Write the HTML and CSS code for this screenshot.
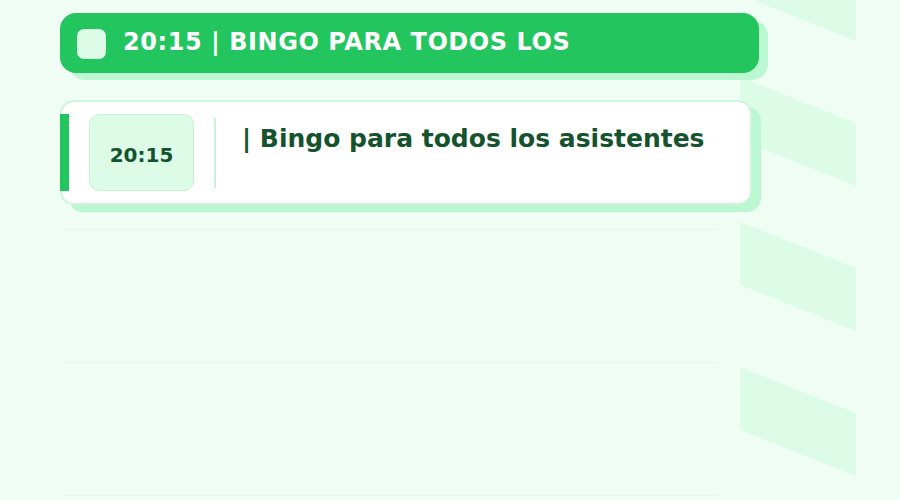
FILE: index.html
```html
<!DOCTYPE html>
<html lang="es">
<head>
<meta charset="utf-8">
<title>Programa</title>
<link rel="stylesheet" href="styles.css">
</head>
<body>
<div class="board">
  <svg class="stripes" width="900" height="500" viewBox="0 0 900 500" aria-hidden="true">
    <polygon points="740,-68 856,-22 856,41 740,-5"/>
    <polygon points="740,77 856,123 856,186 740,140"/>
    <polygon points="740,222 856,268 856,331 740,285"/>
    <polygon points="740,367 856,413 856,476 740,430"/>
  </svg>

  <div class="content">
    <header class="banner">
      <span class="banner-icon"></span>
      <h1 class="banner-title">20:15 | BINGO PARA TODOS LOS</h1>
    </header>

    <ul class="agenda">
      <li class="slot">
        <article class="event">
          <div class="event-time">20:15</div>
          <span class="event-divider"></span>
          <h2 class="event-title">| Bingo para todos los asistentes</h2>
        </article>
      </li>
      <li class="slot slot-empty"></li>
      <li class="slot slot-empty"></li>
    </ul>
  </div>
</div>
</body>
</html>
```

FILE: styles.css
```css
* {
  box-sizing: border-box;
}

html,
body {
  margin: 0;
  padding: 0;
}

body {
  width: 900px;
  height: 500px;
  overflow: hidden;
  background: #f0fdf4;
  font-family: "DejaVu Sans", "Noto Sans", sans-serif;
}

.board {
  position: relative;
  width: 900px;
  height: 500px;
}

/* decorative slanted bands down the right side */
.stripes {
  position: absolute;
  top: 0;
  left: 0;
  z-index: 0;
}

.stripes polygon {
  fill: #dcfce7;
}

.content {
  position: relative;
  z-index: 1;
  width: 699px;
  margin-left: 60px;
  padding-top: 13px;
}

/* top banner */
.banner {
  display: flex;
  align-items: center;
  gap: 17px;
  height: 60px;
  padding-left: 17px;
  background: #22c55e;
  border-radius: 16px;
  box-shadow: 9px 7px 0 #bbf7d0;
}

.banner-icon {
  flex: none;
  width: 29px;
  height: 30px;
  margin-top: 2px;
  border-radius: 7px;
  background: #dcfce7;
}

.banner-title {
  margin: 0 0 3px;
  color: #ffffff;
  font-size: 24px;
  font-weight: bold;
  letter-spacing: 0.55px;
  white-space: nowrap;
}

/* list of time slots */
.agenda {
  list-style: none;
  margin: 27px 0 0;
  padding: 0;
}

.slot::after {
  content: "";
  display: block;
  height: 1px;
  margin: 24px 41px 0 4px;
  background: #e4f7ea;
}

.slot-empty {
  padding-top: 108px;
}

.event {
  position: relative;
  display: flex;
  align-items: center;
  width: 692px;
  height: 105px;
  padding: 0 20px 0 27px;
  background: #ffffff;
  border: 2px solid #cdf5dc;
  border-radius: 14px;
  box-shadow: 9px 7px 0 #bbf7d0;
}

.event::before {
  content: "";
  position: absolute;
  left: -2px;
  top: 12px;
  bottom: 12px;
  width: 9px;
  background: #22c55e;
}

.event-time {
  flex: none;
  display: flex;
  align-items: center;
  justify-content: center;
  width: 105px;
  height: 77px;
  padding-top: 4px;
  background: #dcfce7;
  border: 1px solid #c4f3d5;
  border-radius: 10px;
  color: #14532d;
  font-size: 20px;
  font-weight: bold;
}

.event-divider {
  flex: none;
  width: 2px;
  height: 70px;
  margin: 0 26px 0 20px;
  background: #c9f3d8;
}

.event-title {
  align-self: flex-start;
  margin: 0;
  padding-top: 22px;
  color: #14532d;
  font-size: 25px;
  font-weight: bold;
  line-height: 1.2;
  white-space: nowrap;
}
```
